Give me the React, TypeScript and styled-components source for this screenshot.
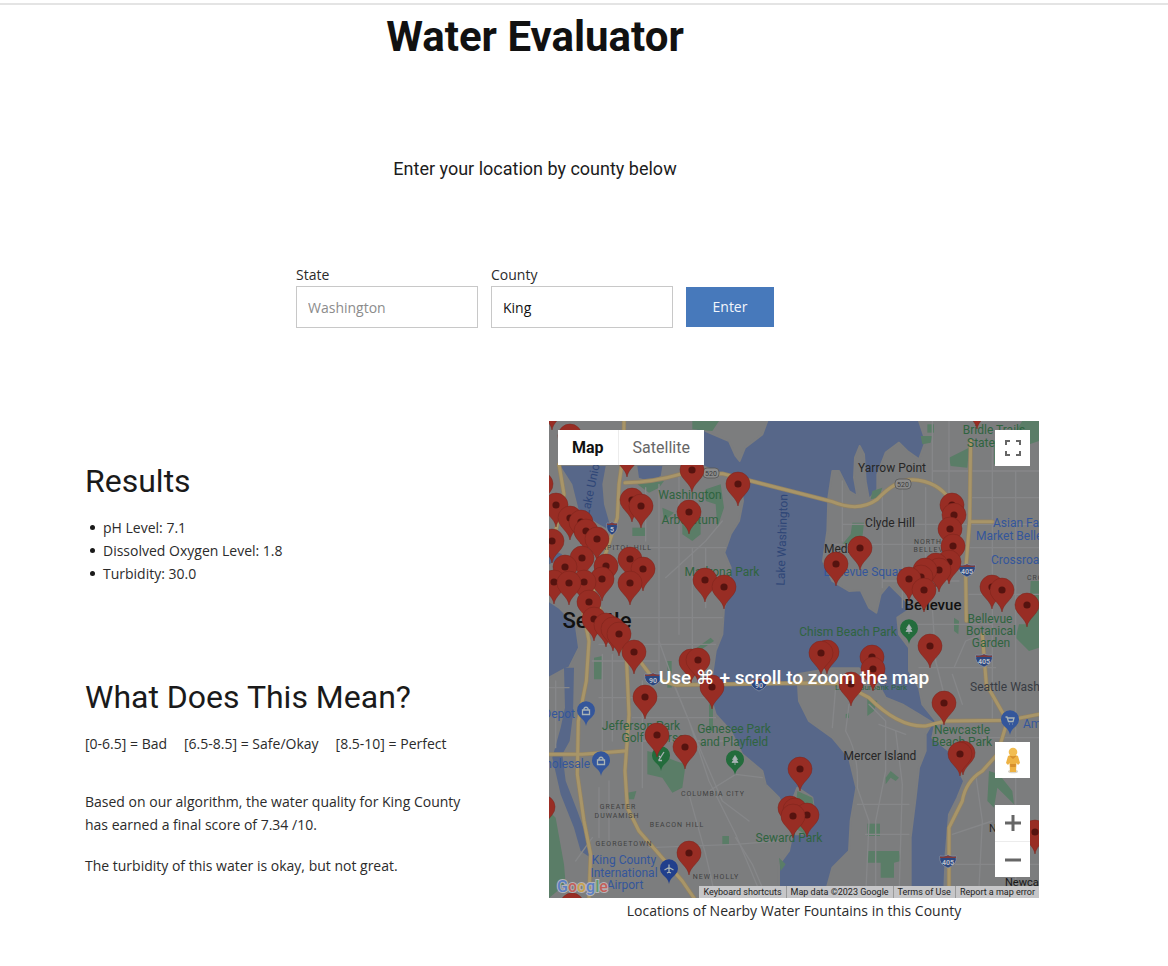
import React from "react";
import styled, { createGlobalStyle } from "styled-components";

const heading = `Roboto, "Liberation Sans", sans-serif`;
const body = `"Open Sans", "Liberation Sans", sans-serif`;

const GlobalStyle = createGlobalStyle`
  *, *::before, *::after { box-sizing: border-box; }
  body {
    margin: 0;
    background: #fff;
    color: #2b2b2b;
    font-family: ${body};
    font-size: 14px;
    line-height: 23px;
  }
  h1, h2, p, ul, figure { margin: 0; padding: 0; }
`;

const TopRule = styled.div`
  height: 5px;
  border-bottom: 2px solid #e4e4e4;
`;

const Page = styled.main`
  padding: 6px 129px 44px 31px;
`;

const Intro = styled.header`
  display: flex;
  flex-direction: column;
  align-items: center;
  gap: 92px;
`;

const Title = styled.h1`
  font: 700 42px/52px ${heading};
  color: #111;
`;

const Subtitle = styled.p`
  font: 400 18px/28px ${heading};
  color: #1c1c1c;
`;

const Form = styled.form`
  display: flex;
  justify-content: center;
  align-items: flex-end;
  gap: 13px;
  margin-top: 80px;
`;

const Field = styled.label`
  display: flex;
  flex-direction: column;
  width: 182px;
`;

const TextInput = styled.input`
  width: 100%;
  height: 42px;
  padding: 0 11px;
  border: 1px solid #c8c8c8;
  border-radius: 0;
  background: #fff;
  color: #111;
  font: 400 14px/20px ${body};
  &::placeholder { color: #8c8c8c; opacity: 1; }
`;

const SubmitButton = styled.button`
  width: 88px;
  height: 40px;
  margin-bottom: 1px;
  border: 0;
  background: #4779bb;
  color: #f3f6fb;
  font: 400 14px/20px ${body};
  cursor: pointer;
`;

const Columns = styled.div`
  display: grid;
  grid-template-columns: minmax(0, 518fr) minmax(0, 490fr);
  margin-top: 93px;
`;

const Report = styled.div`
  display: flex;
  flex-direction: column;
  gap: 92px;
  padding: 40px 72px 0 54px;
`;

const Section = styled.section``;

const SectionTitle = styled.h2`
  margin-bottom: 15px;
  font: 400 32px/40px ${heading};
  color: #1a1a1a;
`;

const Metrics = styled.ul`
  list-style: none;
`;

const Metric = styled.li`
  display: flex;
  align-items: center;
  gap: 8px;
  padding-left: 5px;
  &::before {
    content: "";
    width: 5px;
    height: 5px;
    border-radius: 50%;
    background: #1a1a1a;
  }
`;

const Scale = styled.p`
  display: flex;
  flex-wrap: wrap;
  column-gap: 17px;
  margin-bottom: 35px;
`;

const Paragraph = styled.p`
  & + & { margin-top: 18px; }
`;

const MapFigure = styled.figure``;

const MapCaption = styled.figcaption`
  padding-top: 1px;
  text-align: center;
`;

const MapFrame = styled.div`
  position: relative;
  aspect-ratio: 490 / 477;
  overflow: hidden;
  background: #576789;
`;

const MapSvg = styled.svg`
  display: block;
  width: 100%;
  height: 100%;
`;

const MapTypes = styled.div`
  position: absolute;
  top: 9px;
  left: 9px;
  display: flex;
  background: #fff;
`;

const MapTypeButton = styled.button<{ $active?: boolean }>`
  height: 35px;
  padding: 0 14px;
  border: 0;
  border-left: ${(p) => (p.$active ? "0" : "1px solid #ececec")};
  background: #fff;
  color: ${(p) => (p.$active ? "#111" : "#666")};
  font: ${(p) => (p.$active ? 700 : 400)} 16px/20px ${heading};
  cursor: pointer;
`;

const ControlStack = styled.div<{ $edge: "top" | "bottom" }>`
  position: absolute;
  right: 9px;
  ${(p) => (p.$edge === "top" ? "top: 9px;" : "bottom: 21px;")}
  display: flex;
  flex-direction: column;
  gap: 27px;
`;

const ControlGroup = styled.div`
  display: flex;
  flex-direction: column;
  background: #fff;
`;

const ControlButton = styled.button`
  display: flex;
  align-items: center;
  justify-content: center;
  width: 35px;
  height: 36px;
  padding: 0;
  border: 0;
  background: #fff;
  cursor: pointer;
  & + & { border-top: 1px solid #ececec; }
`;

const ScrollHint = styled.p`
  position: absolute;
  inset: 0;
  display: flex;
  align-items: center;
  justify-content: center;
  padding-top: 36px;
  color: #fff;
  font: 500 19px/24px Roboto, "DejaVu Sans", sans-serif;
  text-align: center;
  white-space: pre;
  pointer-events: none;
`;

const Attribution = styled.div`
  position: absolute;
  right: 0;
  bottom: 0;
  display: flex;
  background: #c6c6c8;
`;

const AttributionItem = styled.span`
  padding: 0 4px;
  color: #222;
  font: 400 9px/12px ${heading};
  white-space: nowrap;
  & + & { border-left: 1px solid #9a9a9a; }
  a { color: inherit; text-decoration: none; }
`;

const ShortcutsButton = styled.button`
  padding: 0;
  border: 0;
  background: none;
  color: inherit;
  font: inherit;
  cursor: pointer;
`;

/* Fountain pins: centre of the pin head, in map units. */
const pins: [number, number][] = [
  [3, -13], [21, 15], [428, -14], [78, 34], [-8, 63], [143, 49], [189, 63],
  [83, 79], [92, 85], [7, 84], [140, 91], [21, 97], [32, 101], [37, 110],
  [48, 118], [3, 120], [33, 137], [16, 146], [57, 145], [81, 138], [94, 148],
  [53, 158], [5, 161], [35, 161], [20, 162], [81, 162], [156, 159], [175, 166],
  [403, 84], [405, 94], [401, 108], [404, 125], [400, 141], [387, 144],
  [390, 149], [376, 149], [372, 156], [360, 158], [375, 169], [311, 127],
  [287, 143], [443, 166], [453, 169], [478, 184], [40, 181], [45, 198],
  [57, 204], [64, 208], [70, 213], [85, 231], [142, 240], [149, 239],
  [163, 266], [96, 276], [278, 231], [272, 232], [323, 236], [324, 248],
  [302, 263], [381, 225], [395, 282], [108, 314], [136, 326], [140, 432],
  [-6, 386], [23, 484], [251, 348], [241, 387], [246, 389], [258, 394],
  [244, 395], [414, 332], [411, 333], [486, 411],
];

type Label = {
  x: number; y: number; t: string; c?: string; s?: number;
  w?: number; a?: "start" | "end"; ls?: number;
};

const ink = "#262626";
const park = "#2f6440";
const place = "#34569b";
const district = "#414141";

const labels: Label[] = [
  { x: 343, y: 51, t: "Yarrow Point", c: ink, s: 12 },
  { x: 341, y: 106, t: "Clyde Hill", c: ink, s: 12 },
  { x: 275, y: 132, t: "Medina", c: ink, s: 12, a: "start" },
  { x: 384, y: 189, t: "Bellevue", c: "#111", s: 15, w: 500 },
  { x: 48, y: 207, t: "Seattle", c: "#111", s: 22, w: 500 },
  { x: 331, y: 339, t: "Mercer Island", c: ink, s: 12 },
  { x: 456, y: 465, t: "Newcastle", c: "#161616", s: 11, a: "start" },
  { x: 440, y: 411, t: "Newport", c: ink, s: 11, a: "start" },
  { x: 141, y: 78, t: "Washington", c: park, s: 12 },
  { x: 141, y: 103, t: "Arboretum", c: park, s: 12 },
  { x: 173, y: 155, t: "Madrona Park", c: park, s: 12 },
  { x: 299, y: 215, t: "Chism Beach Park", c: park, s: 12 },
  { x: 322, y: 269, t: "Luther Burbank Park", c: park, s: 8 },
  { x: 441, y: 202, t: "Bellevue", c: park, s: 12 },
  { x: 442, y: 214, t: "Botanical", c: park, s: 12 },
  { x: 442, y: 226, t: "Garden", c: park, s: 12 },
  { x: 445, y: 13, t: "Bridle Trails", c: park, s: 12 },
  { x: 418, y: 26, t: "State Park", c: park, s: 12, a: "start" },
  { x: 92, y: 309, t: "Jefferson Park", c: park, s: 12 },
  { x: 104, y: 321, t: "Golf Course", c: park, s: 12 },
  { x: 185, y: 312, t: "Genesee Park", c: park, s: 12 },
  { x: 185, y: 325, t: "and Playfield", c: park, s: 12 },
  { x: 240, y: 421, t: "Seward Park", c: park, s: 12 },
  { x: 413, y: 313, t: "Newcastle", c: park, s: 12 },
  { x: 413, y: 325, t: "Beach Park", c: park, s: 12 },
  { x: 444, y: 106, t: "Asian Family", c: place, s: 12, a: "start" },
  { x: 427, y: 119, t: "Market Bellevue", c: place, s: 12, a: "start" },
  { x: 442, y: 143, t: "Crossroads", c: place, s: 12, a: "start" },
  { x: 317, y: 155, t: "Bellevue Square", c: place, s: 12 },
  { x: 26, y: 297, t: "Depot", c: place, s: 12, a: "end" },
  { x: 41, y: 347, t: "Wholesale", c: place, s: 12, a: "end" },
  { x: 474, y: 307, t: "Amazon", c: place, s: 12, a: "start" },
  { x: 75, y: 443, t: "King County", c: place, s: 12 },
  { x: 75, y: 456, t: "International", c: place, s: 12 },
  { x: 76, y: 468, t: "Airport", c: place, s: 12 },
  { x: 421, y: 270, t: "Seattle Washington", c: "#383c43", s: 12, a: "start" },
  { x: 164, y: 375, t: "COLUMBIA CITY", c: district, s: 7, ls: 1 },
  { x: 69, y: 388, t: "GREATER", c: district, s: 7, ls: 1 },
  { x: 68, y: 397, t: "DUWAMISH", c: district, s: 7, ls: 1 },
  { x: 128, y: 406, t: "BEACON HILL", c: district, s: 7, ls: 1 },
  { x: 75, y: 425, t: "GEORGETOWN", c: district, s: 7, ls: 1 },
  { x: 167, y: 458, t: "NEW HOLLY", c: district, s: 7, ls: 1 },
  { x: 75, y: 129, t: "CAPITOL HILL", c: district, s: 7, ls: 1 },
  { x: 379, y: 123, t: "NORTH", c: district, s: 7, ls: 1 },
  { x: 385, y: 131, t: "BELLEVUE", c: district, s: 7, ls: 1 },
  { x: 478, y: 159, t: "CROSSROADS", c: district, s: 7, a: "start", ls: 1 },
];

const Pin = ({ x, y }: { x: number; y: number }) => (
  <g transform={`translate(${x} ${y})`}>
    <path
      d="M0 22C-1 16-5 13-9 8A12 12 0 1 1 9 8C5 13 1 16 0 22Z"
      fill="#982d24" stroke="#7d241d" strokeWidth="0.5"
    />
    <circle r="3.600" fill="#56130f" />
  </g>
);

const PoiPin = ({ x, y, color, kind }: { x: number; y: number; color: string; kind: "tree" | "bag" | "cart" | "plane" | "golf" }) => (
  <g transform={`translate(${x} ${y})`}>
    <path d="M0 15C-1 10-3 9-6 6A9 9 0 1 1 6 6C3 9 1 10 0 15Z" fill={color} />
    <g fill="none" stroke="#a9b3b5" strokeWidth="1.300">
      {kind === "tree" && <path d="M0-4.500L-2.500-.5H-1L-3 2.500H3L1-.5H2.500ZM0 2.500V5" fill="#a9b3b5" strokeWidth="0.800" />}
      {kind === "bag" && <path d="M-3.500-1H3.500V3.500H-3.500ZM-2-1V-2.500Q0-5 2-2.500V-1" />}
      {kind === "cart" && <path d="M-4.500-3H-3L-1.500 1.500H3L4-2H-2.500M-1 4h.5M2.500 4h.5" />}
      {kind === "plane" && <path d="M0-4.500V4M-4.500 1L0-1.500L4.500 1M-2 4L0 3L2 4" />}
      {kind === "golf" && <path d="M-2.500 4.500L3-4M-2.500 4.500H1M-2 0L0 2" />}
    </g>
  </g>
);

const Interstate = ({ x, y, n }: { x: number; y: number; n: string }) => {
  const w = n.length > 1 ? 8 : 5;
  return (
    <g transform={`translate(${x} ${y})`}>
      <path
        d={`M${-w}-5Q${-w / 2}-4 0-6Q${w / 2}-4 ${w}-5Q${w + 2} 3 0 7Q${-w - 2} 3 ${-w}-5Z`}
        fill="#2c4780" stroke="#8f96a3" strokeWidth="0.7"
      />
      <path d={`M${-w}-4.500Q${-w / 2}-3.500 0-5.500Q${w / 2}-3.500 ${w}-4.500L${w}-3H${-w}Z`} fill="#813a3a" />
      <text y="4" textAnchor="middle" fontSize="7" fontWeight="700" fill="#b9bec8">{n}</text>
    </g>
  );
};

const RouteBadge = ({ x, y }: { x: number; y: number }) => (
  <g transform={`translate(${x} ${y})`}>
    <rect x="-8" y="-5" width="16" height="10" rx="4" fill="#8b8b8b" stroke="#555" strokeWidth="0.8" />
    <text y="3" textAnchor="middle" fontSize="7" fill="#3c3c3c">520</text>
  </g>
);

const majorRoads = [
  "M225 0L224 90L210 190L205 290L192 330",
  "M228 185Q310 185 400 158L520 158L850 242Q930 275 985 235Q1050 165 1110 178Q1180 190 1210 250L1215 330",
  "M1265 60L1262 300L1250 450L1252 600M1262 302L1330 302",
  "M1300 640L1312 790L1375 900L1345 1000L1300 1050Q1250 1080 1240 1140L1200 1220L1200 1431",
  "M100 560L120 660L112 780L88 900L85 1060L105 1200L125 1300L120 1431",
  "M192 330L130 520L180 620L232 700L240 880L228 1050L235 1160L270 1230L400 1380L435 1431",
  "M250 690L310 770L380 792L760 786L880 788L960 830Q1050 920 1130 915L1190 900L1375 898L1470 880",
  "M0 1000L100 1000L228 990",
  "M30 130L45 220L20 330",
];

const minorRoads = [
  "M160 380H530M150 590H520M150 670H500M130 720H330M150 830H480M250 890H500M260 960H560",
  "M290 200V360M330 190V780M390 160V640M430 380V780M470 380V560M350 470L470 360L520 300",
  "M160 700V1000M190 700V960M280 780V1100M150 1100V1250M180 1080V1260",
  "M370 780L420 900L480 1080L560 1240L640 1431M330 660L380 800L460 1000L520 1140L600 1200",
  "M480 1110L560 1060L640 1070M300 1280L560 1270L690 1260M420 1120L470 1300L500 1431M560 1250L610 1330L640 1400",
  "M880 180V360M1000 210V500M1060 180V560M1130 200V560M850 370H1200M880 310H1470M1000 480H1230",
  "M1150 0V180M1200 0V220M1330 60V900M1400 150V900M1150 150H1470M1260 230H1470M1260 380H1470M1260 520H1470M1090 610H1330M1110 740H1340",
  "M1150 560L1160 720L1190 840M1215 740L1250 660L1300 640M1210 760L1240 850",
  "M860 800L850 920M900 850L890 930Q930 1000 925 1100L960 1200L950 1431M960 850L1010 900L1010 1050L980 1200V1431M1040 930L1060 1090L1050 1431M925 1150H1080M950 1240H1080M990 910L1070 940",
  "M1280 1060L1300 1200L1290 1400M1210 1240L1330 1200M1220 1330H1470M1300 950H1470M1400 920V1431",
  "M0 800H60M20 780V980M80 1320L130 1250",
];

const parks = [
  "M470 205L515 190L525 260L505 320L500 250L470 240Z",
  "M400 300L455 290L455 340L430 360L400 340Z",
  "M250 320L290 320L290 345L250 345Z",
  "M265 190L345 180L330 200L300 215Z",
  "M430 0L510 0L490 30L430 25Z",
  "M340 260L375 275L345 300Z",
  "M910 305L945 305L940 350L915 370L880 370L905 340Z",
  "M970 210L1000 200L990 230L965 235Z",
  "M1200 110L1260 80L1255 140L1205 135Z",
  "M1335 60L1400 30L1420 0L1470 0V60L1380 90L1380 135L1335 130Z",
  "M1115 45L1150 45L1145 65L1120 70Z",
  "M1445 480H1470V680L1440 690L1400 650L1410 610L1440 610Z",
  "M1135 10H1155V35H1135Z",
  "M135 710L160 705L158 775L135 775Z",
  "M355 720H368V800H355Z",
  "M430 690L485 650L495 660L450 690Z",
  "M480 850H492V930H480Z",
  "M295 990L330 1000L380 1020L410 1030L400 1100L370 1115L340 1070L295 1060Z",
  "M235 1115L262 1110L255 1135L235 1135Z",
  "M520 1245H540V1270H520Z",
  "M745 1110L790 1130L800 1200L770 1240L735 1220Z",
  "M955 1208H993V1245H955Z",
  "M955 1290H1050L1055 1320L1035 1325V1370H995V1325H955Z",
  "M955 830L985 840L975 870L955 885Z",
  "M1010 1070L1025 1050L1050 1070L1040 1080L1025 1070L1010 1090Z",
  "M1320 1050L1350 1060L1390 1110L1395 1150L1345 1100L1335 1160L1315 1140Z",
  "M0 1170L20 1190L45 1330L50 1390L0 1431Z",
  "M1215 590L1230 600L1228 640L1215 630Z",
  "M690 1310L710 1330L695 1350Z",
  "M890 880L900 875L900 890L890 892Z",
];

const lands = [
  "M430 0H655L640 40L588 80L572 120L560 105L540 60L470 30Z",
  "M0 0H440L450 130L520 160L575 185L582 240L570 300L545 340L526 395L545 440L540 520L525 560L520 640L500 690L490 760L485 830L500 880L545 930L580 1000L640 1050L650 1090L690 1130L710 1190L745 1100L790 1130L800 1200L770 1240L730 1240L720 1290L690 1330L690 1431H0V770L45 745L60 740L90 680L80 610L30 560L0 540Z",
  "M1110 0L1130 60L1110 115L1075 90L1050 65L1010 95L985 160L985 205L960 235L950 180L945 100L932 75L918 110L915 170L925 225L900 210L870 150L850 150L838 230L835 330L822 420L850 480L900 510L935 508L960 560L982 575L995 520L1020 490L1060 530L1090 560L1045 590L1050 640L1080 680L1080 750L1110 800L1120 850L1160 900L1150 950L1200 990L1245 1080L1225 1130L1200 1180L1190 1300L1185 1431H1470V0Z",
  "M745 760L850 742L930 742L985 785L1010 830L1060 850L1110 880L1150 905L1130 940L1130 990L1110 1040L1100 1130L1085 1250L1085 1431H825L850 1340L900 1290L905 1200L922 1100L900 1010L850 950L780 900L750 840Z",
];

const waters = [
  "M35 135H170L160 190L165 250L188 330L150 310L90 270L70 190Z",
  "M265 135H340L335 165L300 180L270 170Z",
  "M45 740H75L72 880L62 960L40 1000L50 1080L85 1170L110 1240L125 1310L95 1290L75 1220L35 1120L10 1010L35 920L48 860Z",
  "M0 385L40 400L20 420L0 430Z",
];

function CountyMap() {
  return (
    <MapSvg viewBox="0 0 490 477" preserveAspectRatio="xMidYMid slice" role="img" aria-label="Map of King County water fountains" fontFamily="Roboto, sans-serif">
      <rect width="490" height="477" fill="#576789" />
      <g transform="scale(0.333333)" strokeLinejoin="round" strokeLinecap="round">
        {lands.map((d) => <path key={d} d={d} fill="#7c7d7e" stroke="#7c7d7e" strokeWidth="6" />)}
        {waters.map((d) => <path key={d} d={d} fill="#576789" />)}
        {parks.map((d) => <path key={d} d={d} fill="#5a7d67" />)}
        {minorRoads.map((d) => <path key={d} d={d} fill="none" stroke="#868789" strokeWidth="4" />)}
        {majorRoads.map((d) => <path key={d} d={d} fill="none" stroke="#928263" strokeWidth="13" />)}
        {majorRoads.map((d) => <path key={d} d={d} fill="none" stroke="#a89568" strokeWidth="9" />)}
      </g>

      {labels.map((l) => (
        <text
          key={l.t + l.y} x={l.x} y={l.y} fill={l.c} fontSize={l.s}
          fontWeight={l.w ?? 400} textAnchor={l.a ?? "middle"} letterSpacing={l.ls ?? 0}
        >
          {l.t}
        </text>
      ))}
      <text transform="translate(237 119) rotate(-88)" textAnchor="middle" fontSize="12" fill="#2f4677">Lake Washington</text>
      <text transform="translate(46 66) rotate(-78)" textAnchor="middle" fontSize="12" fill="#2f4677">Lake Union</text>

      <Interstate x={63} y={107} n="5" />
      <Interstate x={418} y={149} n="405" />
      <Interstate x={435} y={239} n="405" />
      <Interstate x={399} y={440} n="405" />
      <Interstate x={104} y={258} n="90" />
      <Interstate x={210} y={263} n="90" />
      <RouteBadge x={162} y={52} />
      <RouteBadge x={354} y={63} />

      <PoiPin x={360} y={208} color="#236c3c" kind="tree" />
      <PoiPin x={186} y={339} color="#236c3c" kind="tree" />
      <PoiPin x={112} y={335} color="#236c3c" kind="golf" />
      <PoiPin x={37} y={290} color="#34569b" kind="bag" />
      <PoiPin x={52} y={340} color="#34569b" kind="bag" />
      <PoiPin x={461} y={299} color="#34569b" kind="cart" />
      <PoiPin x={120} y={448} color="#213f8c" kind="plane" />

      {pins.map(([x, y]) => <Pin key={`${x},${y}`} x={x} y={y} />)}

      <text x="8" y="471" fontSize="16" fontWeight="500" stroke="#b4b4b8" strokeWidth="2" paintOrder="stroke">
        <tspan fill="#5b7fc4">G</tspan>
        <tspan fill="#c4605a">o</tspan>
        <tspan fill="#c9a34e">o</tspan>
        <tspan fill="#5b7fc4">g</tspan>
        <tspan fill="#5f9a6c">l</tspan>
        <tspan fill="#c4605a">e</tspan>
      </text>
    </MapSvg>
  );
}

const FullscreenIcon = () => (
  <svg width="20" height="20" viewBox="0 0 20 20" fill="none" stroke="#666" strokeWidth="2" aria-hidden="true">
    <path d="M3 7V3H7M13 3H17V7M17 13V17H13M7 17H3V13" />
  </svg>
);

const PegmanIcon = () => (
  <svg width="16" height="27" viewBox="0 0 16 27" aria-hidden="true">
    <ellipse cx="8" cy="24.500" rx="5" ry="1.800" fill="#d9d3c6" />
    <path d="M3 9Q8 6 13 9L15 16L13 18L11.500 16L11 25H5L4.500 16L3 18L1 16Z" fill="#eeb243" />
    <path d="M5 17H11L10.700 20H5.300Z" fill="#d68f2d" />
    <path d="M4.500 9L8 12L11.500 9Z" fill="#d68f2d" />
    <circle cx="8" cy="5" r="4.300" fill="#f2bd51" />
  </svg>
);

const ZoomIcon = ({ plus }: { plus?: boolean }) => (
  <svg width="16" height="16" viewBox="0 0 16 16" fill="none" stroke="#666" strokeWidth="3" aria-hidden="true">
    <path d={plus ? "M0 8H16M8 0V16" : "M0 8H16"} />
  </svg>
);

export default function App() {
  return (
    <>
      <GlobalStyle />
      <TopRule />
      <Page>
        <Intro>
          <Title>Water Evaluator</Title>
          <Subtitle>Enter your location by county below</Subtitle>
        </Intro>

        <Form onSubmit={(e) => e.preventDefault()}>
          <Field>
            State
            <TextInput name="state" placeholder="Washington" />
          </Field>
          <Field>
            County
            <TextInput name="county" defaultValue="King" />
          </Field>
          <SubmitButton type="submit">Enter</SubmitButton>
        </Form>

        <Columns>
          <Report>
            <Section>
              <SectionTitle>Results</SectionTitle>
              <Metrics>
                <Metric>pH Level: 7.1</Metric>
                <Metric>Dissolved Oxygen Level: 1.8</Metric>
                <Metric>Turbidity: 30.0</Metric>
              </Metrics>
            </Section>
            <Section>
              <SectionTitle>What Does This Mean?</SectionTitle>
              <Scale>
                <span>[0-6.5] = Bad</span>
                <span>[6.5-8.5] = Safe/Okay</span>
                <span>[8.5-10] = Perfect</span>
              </Scale>
              <Paragraph>
                Based on our algorithm, the water quality for King County has earned a final score of 7.34 /10.
              </Paragraph>
              <Paragraph>The turbidity of this water is okay, but not great.</Paragraph>
            </Section>
          </Report>

          <MapFigure>
            <MapFrame>
              <CountyMap />
              <ScrollHint>Use ⌘ + scroll to zoom the map</ScrollHint>
              <MapTypes>
                <MapTypeButton type="button" $active>Map</MapTypeButton>
                <MapTypeButton type="button">Satellite</MapTypeButton>
              </MapTypes>
              <ControlStack $edge="top">
                <ControlButton type="button" aria-label="Toggle fullscreen view"><FullscreenIcon /></ControlButton>
              </ControlStack>
              <ControlStack $edge="bottom">
                <ControlButton type="button" aria-label="Open Street View"><PegmanIcon /></ControlButton>
                <ControlGroup>
                  <ControlButton type="button" aria-label="Zoom in"><ZoomIcon plus /></ControlButton>
                  <ControlButton type="button" aria-label="Zoom out"><ZoomIcon /></ControlButton>
                </ControlGroup>
              </ControlStack>
              <Attribution>
                <AttributionItem><ShortcutsButton type="button">Keyboard shortcuts</ShortcutsButton></AttributionItem>
                <AttributionItem>Map data ©2023 Google</AttributionItem>
                <AttributionItem><a href="#terms">Terms of Use</a></AttributionItem>
                <AttributionItem><a href="#report">Report a map error</a></AttributionItem>
              </Attribution>
            </MapFrame>
            <MapCaption>Locations of Nearby Water Fountains in this County</MapCaption>
          </MapFigure>
        </Columns>
      </Page>
    </>
  );
}
